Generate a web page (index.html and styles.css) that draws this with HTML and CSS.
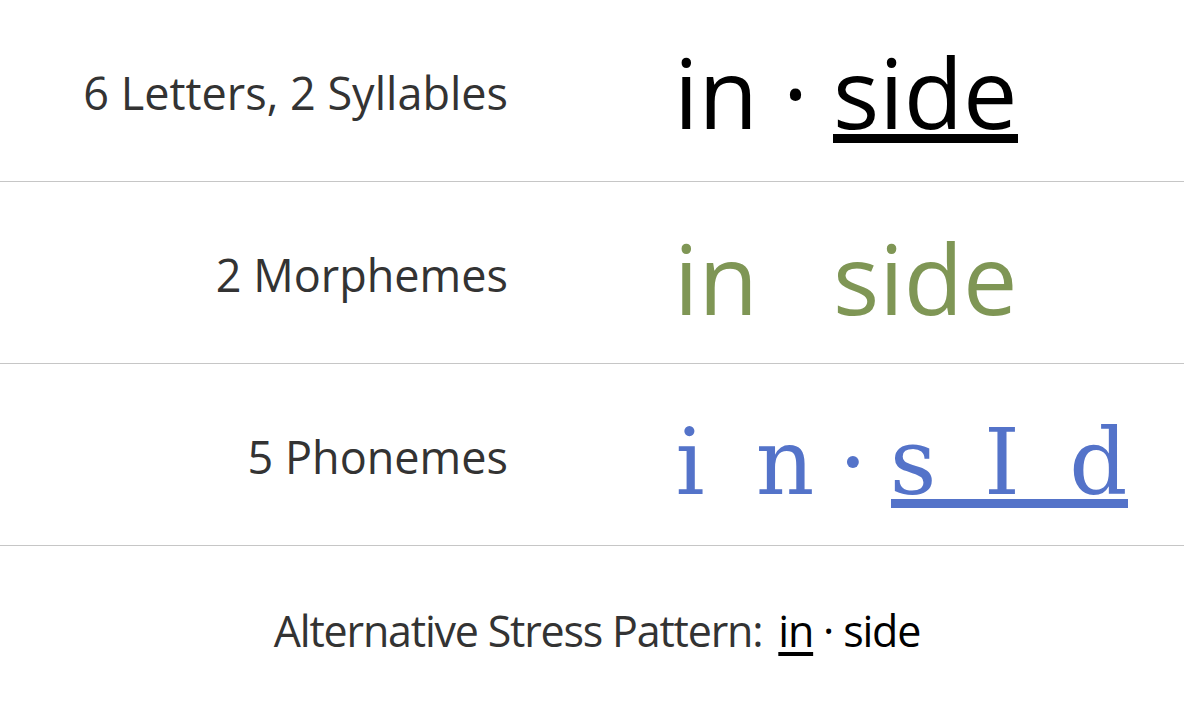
FILE: index.html
```html
<!DOCTYPE html>
<html>
<head>
<meta charset="utf-8">
<link rel="stylesheet" href="styles.css">
</head>
<body>
<div class="page">
  <div class="row">
    <div class="label">6 Letters, 2 Syllables</div>
    <div class="word letters">
      <span class="syl">in</span><span class="dot">·</span><span class="syl stress">side</span>
    </div>
  </div>
  <div class="row">
    <div class="label">2 Morphemes</div>
    <div class="word morph">
      <span class="syl">in</span><span class="dot hidden">·</span><span class="syl">side</span>
    </div>
  </div>
  <div class="row">
    <div class="label">5 Phonemes</div>
    <div class="word phon">
      <span class="ph w-i">i</span><span class="sp"></span><span class="ph w-n">n</span><span class="pdot">·</span><span class="ph w-s st">s</span><span class="sp st"></span><span class="ph w-I st">I</span><span class="sp st"></span><span class="ph w-d st">d</span>
    </div>
  </div>
  <div class="alt">
    <span class="alt-label">Alternative Stress Pattern:</span>
    <span class="alt-word"><span class="alt-stress">in</span> · side</span>
  </div>
</div>
</body>
</html>
```
FILE: styles.css
```css
html, body {
  margin: 0;
  padding: 0;
  background: #fff;
}
.page {
  width: 1184px;
  height: 728px;
  display: flex;
  flex-direction: column;
  font-family: "Open Sans", "Noto Sans", sans-serif;
}
.row {
  height: 181px;
  flex: none;
  display: grid;
  grid-template-columns: 1fr 1fr;
  column-gap: 164px;
  align-items: center;
  border-bottom: 1px solid #c6c6c6;
}
.label {
  text-align: right;
  font-size: 45px;
  line-height: normal;
  color: #333;
  margin-top: 4px;
  padding-right: 2px;
}
.word {
  display: flex;
  align-items: flex-start;
  white-space: nowrap;
}
.letters, .morph {
  font-size: 97px;
  line-height: 97px;
  margin-top: 4px;
}
.letters { color: #000; }
.morph { color: #7f9655; }
.syl {
  display: block;
  height: 91px;
}
.dot {
  display: block;
  width: 75px;
  height: 91px;
  text-align: center;
}
.hidden { visibility: hidden; }
.stress {
  border-bottom: 9px solid #000;
}
.phon {
  font-family: "DejaVu Serif", serif;
  color: #5473c9;
  font-size: 91px;
  line-height: 91px;
  margin-top: 15px;
  padding-left: 1px;
}
.ph, .sp, .pdot {
  display: flex;
  justify-content: center;
  height: 82px;
  flex: none;
}
.w-i { width: 30px; }
.w-n { width: 60px; }
.w-s { width: 44px; }
.w-I { width: 34px; }
.w-d { width: 59px; }
.sp { width: 50px; }
.pdot { width: 76px; }
.st {
  border-bottom: 9px solid #5473c9;
}
.alt {
  flex: 1;
  display: flex;
  justify-content: center;
  align-items: center;
  gap: 16px;
  font-size: 43px;
  letter-spacing: -1.2px;
  color: #333;
  padding-bottom: 14px;
  padding-left: 10px;
}
.alt-word {
  color: #000;
}
.alt-stress {
  text-decoration: underline;
  text-decoration-thickness: 4px;
  text-underline-offset: 5px;
}
```
